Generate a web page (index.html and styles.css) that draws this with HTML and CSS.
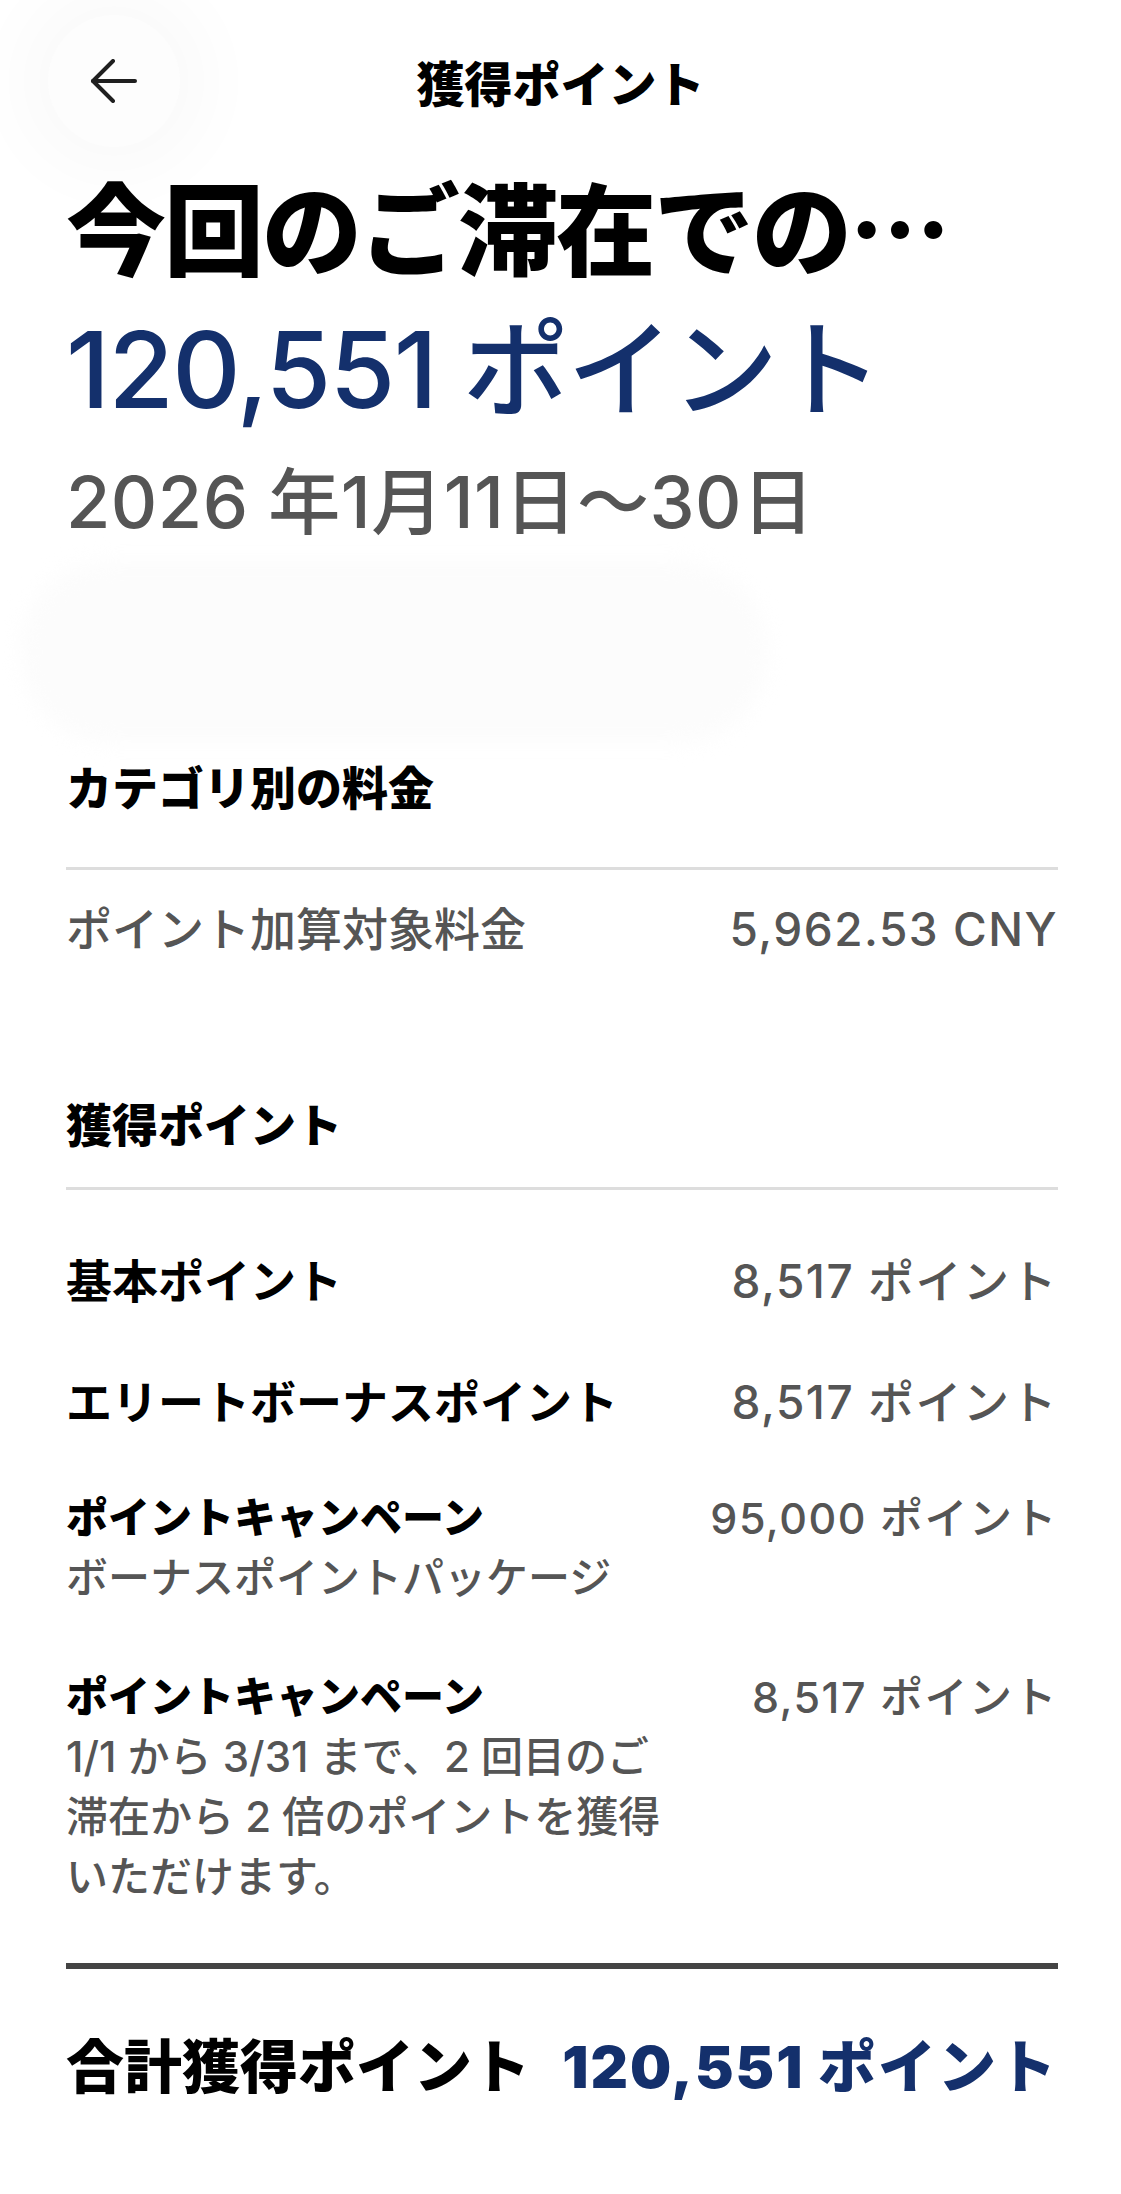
FILE: index.html
```html
<!DOCTYPE html>
<html lang="ja">
<head>
    <meta charset="UTF-8">
    <meta name="viewport" content="width=device-width, initial-scale=1.0">
    <title>獲得ポイント</title>
    <link rel="stylesheet" href="styles.css">
</head>
<body>
    <header class="topbar">
        <button class="back-btn" type="button" aria-label="戻る">
            <svg width="48" height="44" viewBox="0 0 48 44" fill="none" stroke="#1f1f1f" stroke-width="4" stroke-linecap="round" stroke-linejoin="round">
                <path d="M45 22H3"/>
                <path d="M23 2L3 22L23 42"/>
            </svg>
        </button>
        <div class="topbar-title">獲得ポイント</div>
        <div></div>
    </header>

    <main class="content">
        <section class="summary">
            <h1 class="summary-title">今回のご滞在での<span class="ellipsis">…</span></h1>
            <p class="summary-points">120,551 ポイント</p>
            <p class="summary-dates">2026 年1月11日〜30日</p>
            <div class="summary-hidden"></div>
        </section>

        <section class="block">
            <h2 class="block-title">カテゴリ別の料金</h2>
            <div class="row row-muted">
                <span>ポイント加算対象料金</span>
                <span class="row-value">5,962.53 CNY</span>
            </div>
        </section>

        <section class="block block-points">
            <h2 class="block-title">獲得ポイント</h2>
            <div class="row">
                <span class="row-label">基本ポイント</span>
                <span class="row-value">8,517 ポイント</span>
            </div>
            <div class="row">
                <span class="row-label">エリートボーナスポイント</span>
                <span class="row-value">8,517 ポイント</span>
            </div>
            <div class="row row-campaign">
                <div>
                    <div class="campaign-name">ポイントキャンペーン</div>
                    <div class="campaign-desc">ボーナスポイントパッケージ</div>
                </div>
                <span class="row-value">95,000 ポイント</span>
            </div>
            <div class="row row-campaign">
                <div>
                    <div class="campaign-name">ポイントキャンペーン</div>
                    <div class="campaign-desc campaign-desc-long">1/1 から 3/31 まで、2 回目のご滞在から 2 倍のポイントを獲得いただけます。</div>
                </div>
                <span class="row-value">8,517 ポイント</span>
            </div>
        </section>

        <div class="total">
            <span>合計獲得ポイント</span>
            <span class="total-value">120,551 ポイント</span>
        </div>
    </main>
</body>
</html>
```

FILE: styles.css
```css
body {
    margin: 0;
    background: #fff;
    color: #000;
    font-family: Inter, "Noto Sans CJK JP", sans-serif;
}
p, h1, h2 {
    margin: 0;
}
.topbar {
    display: grid;
    grid-template-columns: 1fr auto 1fr;
    align-items: center;
    padding: 15px 48px 0;
}
.back-btn {
    width: 132px;
    height: 132px;
    border: none;
    border-radius: 50%;
    background: #fdfdfd;
    box-shadow: 0 0 70px 30px rgba(0, 0, 0, 0.025);
    display: flex;
    align-items: center;
    justify-content: center;
    padding: 0;
    cursor: pointer;
}
.topbar-title {
    font-size: 48px;
    font-weight: 900;
}
.content {
    padding: 0 63px 0 66px;
}
.summary-title {
    margin-top: 18px;
    font-size: 100px;
    line-height: 120px;
    font-weight: 900;
    letter-spacing: -2px;
}
.ellipsis {
    font-family: "Noto Sans CJK JP", sans-serif;
    letter-spacing: 0;
}
.summary-points {
    margin-top: 22px;
    font-size: 106px;
    line-height: 112px;
    font-weight: 500;
    color: #14306c;
    letter-spacing: -1.5px;
}
.summary-dates {
    margin-top: 36px;
    font-size: 72px;
    line-height: 80px;
    font-weight: 500;
    color: #555;
    letter-spacing: 0.5px;
}
.summary-hidden {
    height: 182px;
    margin: 19px 0 0 -45px;
    width: 746px;
    border-radius: 90px;
    background: #fcfcfc;
    filter: blur(10px);
}
.block-title {
    font-size: 46px;
    line-height: 60px;
    font-weight: 900;
    padding-bottom: 49px;
    border-bottom: 3px solid #ddd;
    margin-top: 15px;
}
.block-points .block-title {
    margin-top: 136px;
    padding-bottom: 32px;
}
.row {
    display: flex;
    justify-content: space-between;
    align-items: flex-start;
    gap: 40px;
    font-size: 46px;
    line-height: 60px;
    margin-top: 29px;
}
.block-points .row {
    margin-top: 61px;
}
.block-points .row.row-campaign {
    margin-top: 56px;
    font-size: 42px;
}
.block-points .row.row-campaign + .row-campaign {
    margin-top: 59px;
}
.row-muted {
    color: #555;
    font-weight: 500;
}
.row-label {
    font-weight: 700;
}
.row-value {
    color: #555;
    font-weight: 500;
    white-space: nowrap;
    letter-spacing: 1.5px;
}
.row-campaign .row-value {
    font-size: 43px;
}
.campaign-name {
    font-weight: 900;
}
.campaign-desc {
    color: #555;
    font-weight: 500;
}
.campaign-desc-long {
    max-width: 620px;
}
.total {
    display: flex;
    justify-content: space-between;
    gap: 20px;
    margin-top: 56px;
    padding-top: 63px;
    border-top: 6px solid #444;
    font-size: 58px;
    line-height: 70px;
    font-weight: 900;
}
.total-value {
    color: #14306c;
    letter-spacing: 2px;
}
```
